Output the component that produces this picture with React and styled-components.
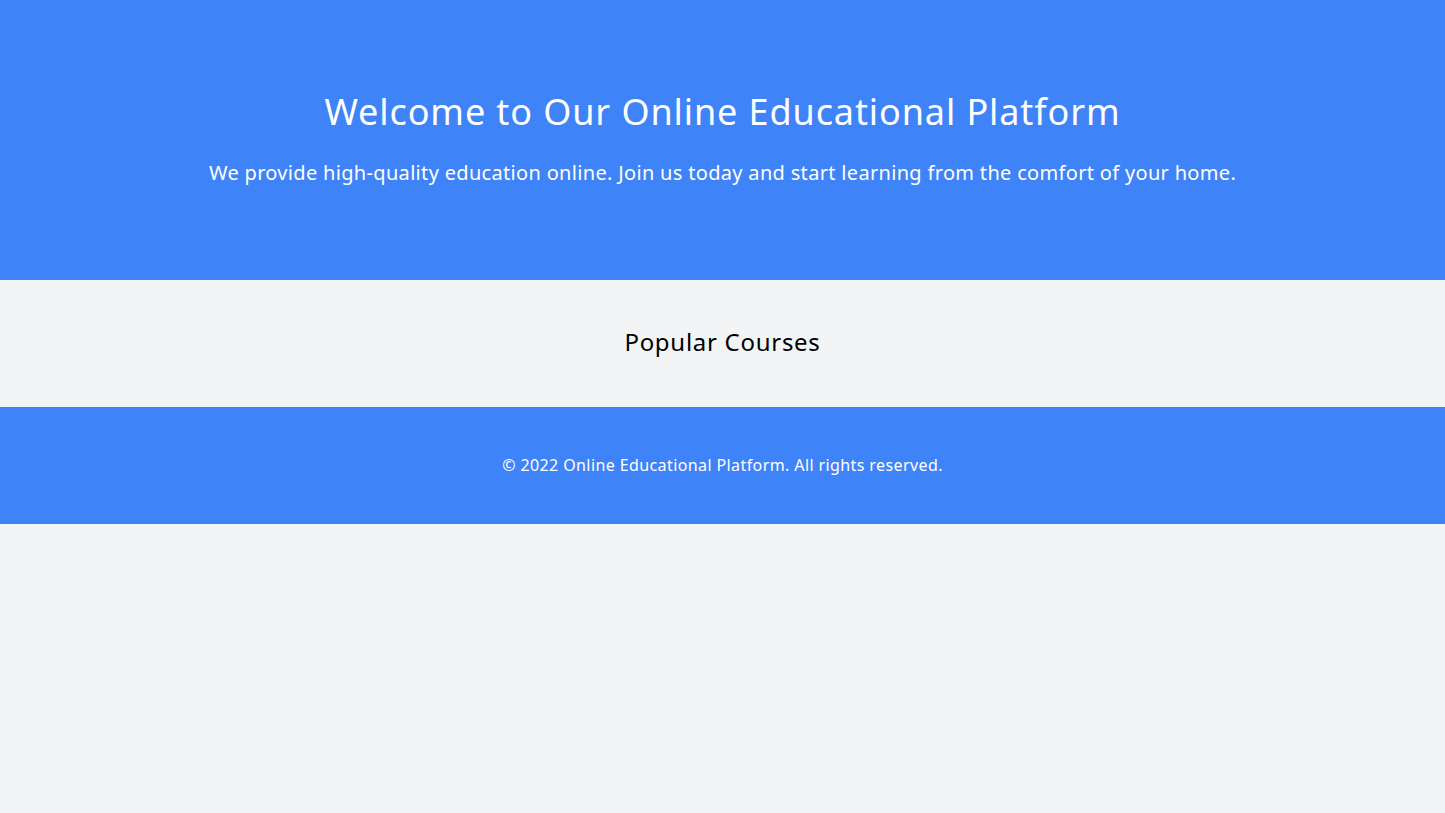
import React from 'react';
import styled, { createGlobalStyle } from 'styled-components';

const GlobalStyle = createGlobalStyle`
  html, body {
    margin: 0;
    padding: 0;
    background: #f3f4f6;
    font-family: "Noto Sans", "Open Sans", sans-serif;
  }
`;

const Page = styled.div`
  min-height: 813px;
  background: #f3f4f6;
  letter-spacing: 0.02em;
`;

const Hero = styled.header`
  background: #3f83f8;
  color: #fff;
  height: 280px;
  box-sizing: border-box;
  padding-top: 92px;
  text-align: center;
`;

const Title = styled.h1`
  margin: 0;
  font-size: 36px;
  line-height: 40px;
  font-weight: 400;
  letter-spacing: 0.025em;
`;

const Lead = styled.p`
  margin: 27px 0 0;
  font-size: 20px;
  line-height: 28px;
`;

const Courses = styled.section`
  padding: 46px 0 49px;
  text-align: center;
`;

const SectionTitle = styled.h2`
  margin: 0;
  font-size: 24px;
  line-height: 32px;
  font-weight: 400;
  color: #000;
  letter-spacing: 0.03em;
`;

const Footer = styled.footer`
  background: #3f83f8;
  color: #fff;
  padding: 46px 0 47px;
  text-align: center;
  font-size: 16px;
  line-height: 24px;
  letter-spacing: 0.025em;
`;

export default function App() {
  return (
    <Page>
      <GlobalStyle />
      <Hero>
        <Title>Welcome to Our Online Educational Platform</Title>
        <Lead>
          We provide high-quality education online. Join us today and start learning from the comfort of your home.
        </Lead>
      </Hero>
      <Courses>
        <SectionTitle>Popular Courses</SectionTitle>
      </Courses>
      <Footer>© 2022 Online Educational Platform. All rights reserved.</Footer>
    </Page>
  );
}
